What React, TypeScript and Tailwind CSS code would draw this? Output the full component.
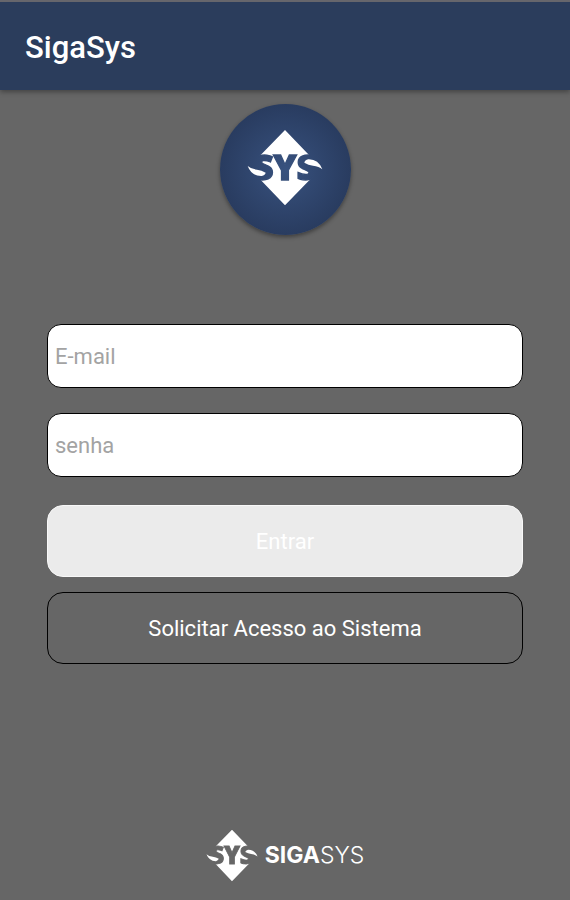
import { useId } from 'react';

function Emblem({ className }: { className: string }) {
  const cut = useId();
  const side = 'M134 29 64 101Q52 110 56 124Q60 132 76 137L86 144Q82 160 72 170L62 180 134 255Z';
  const flame = 'M22 137Q32 146 50 148Q64 150 76 157Q75 164 64 167Q34 168 22 137Z';
  const turned = 'rotate(180 134 142)';
  return (
    <svg viewBox="20 26 228 232" className={className} aria-hidden="true">
      <mask id={cut} maskUnits="userSpaceOnUse" x="20" y="26" width="228" height="232">
        <rect x="20" y="26" width="228" height="232" fill="white" />
        <g
          fill="black"
          stroke="black"
          strokeWidth="4"
          className="font-['Open_Sans',sans-serif] font-extrabold"
          fontSize="106"
          textAnchor="middle"
        >
          <text x="69" y="180">S</text>
          <text x="134" y="180">Y</text>
          <text x="199" y="180">S</text>
        </g>
      </mask>
      <g fill="white" mask={`url(#${cut})`}>
        <path d={side} />
        <path d={side} transform={turned} />
        <path d="M132 34h4v216h-4z" />
      </g>
      {/* flames running out of both S letters */}
      <path d={flame} fill="white" />
      <path d={flame} fill="white" transform={turned} />
    </svg>
  );
}

const field =
  'h-16 w-full rounded-[14px] border border-black bg-white px-[7px] text-[22px] text-neutral-700 outline-none placeholder:text-[#a3a3a3]';

export default function App() {
  return (
    <div className="flex min-h-screen flex-col bg-[#666666] font-[Roboto,sans-serif]">
      <header className="z-10 flex h-[90px] items-center border-t-2 border-[#66666c] bg-[#2b3d5c] px-[25px] pt-[5px] shadow-[0_2px_5px_rgba(0,0,0,0.35)]">
        <h1 className="text-[31px] font-medium text-white">SigaSys</h1>
      </header>

      <main className="flex flex-col items-center px-[47px] pt-3.5">
        <div className="flex size-[131px] items-center justify-center rounded-full bg-radial from-[#38527f] to-[#293c60] to-70% pb-1 shadow-[0_2px_4px_rgba(0,0,0,0.4)]">
          <Emblem className="w-[76px]" />
        </div>

        <form className="mt-[89px] flex w-full flex-col" onSubmit={(e) => e.preventDefault()}>
          <input type="email" aria-label="E-mail" placeholder="E-mail" className={field} />
          <input type="password" aria-label="senha" placeholder="senha" className={`mt-[25px] ${field}`} />
          <button type="submit" className="mt-7 h-[72px] rounded-2xl border border-[#f8f8f8] bg-[#ebebeb] text-[22px] text-white">
            Entrar
          </button>
          <button type="button" className="mt-[15px] h-[72px] rounded-2xl border border-black text-[22px] text-white">
            Solicitar Acesso ao Sistema
          </button>
        </form>
      </main>

      <footer className="mt-auto flex items-center justify-center gap-[7px] pb-[18px] text-white">
        <Emblem className="w-[52px]" />
        <p className="font-[Inter,sans-serif] text-[23px]">
          <span className="font-bold">SIGA</span>
          <span className="font-light">SYS</span>
        </p>
      </footer>
    </div>
  );
}
